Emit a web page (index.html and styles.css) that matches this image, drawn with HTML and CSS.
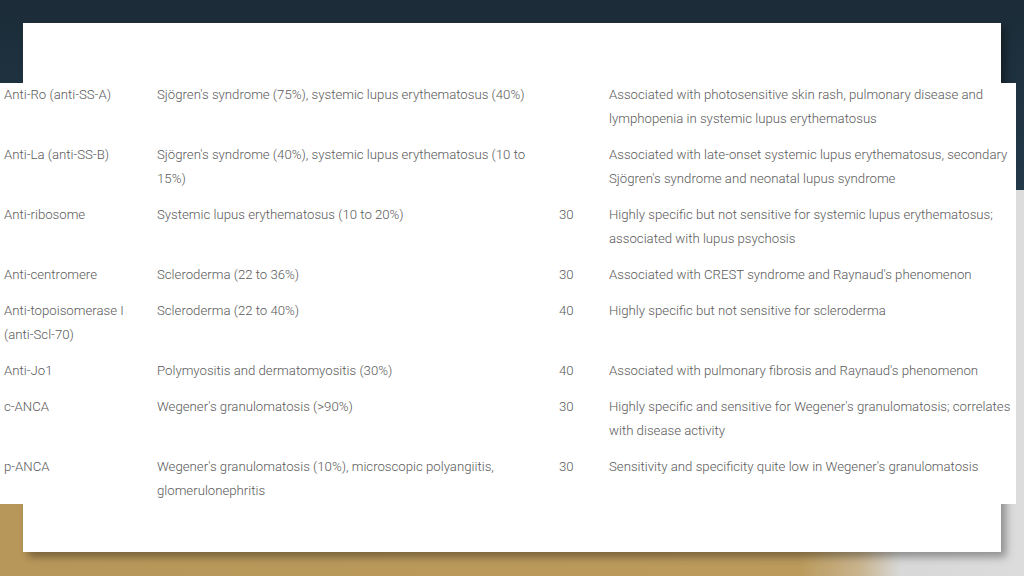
FILE: index.html
```html
<!DOCTYPE html>
<html>
<head>
<meta charset="utf-8">
<link rel="stylesheet" href="styles.css">
</head>
<body>
<div class="page">
  <div class="card">
    <div class="table">
      <div class="row"><div class="c1">Anti-Ro (anti-SS-A)</div><div class="c2">Sjögren's syndrome (75%), systemic lupus erythematosus (40%)</div><div class="c3"></div><div class="c4">Associated with photosensitive skin rash, pulmonary disease and lymphopenia in systemic lupus erythematosus</div></div>
      <div class="row"><div class="c1">Anti-La (anti-SS-B)</div><div class="c2">Sjögren's syndrome (40%), systemic lupus erythematosus (10 to 15%)</div><div class="c3"></div><div class="c4">Associated with late-onset systemic lupus erythematosus, secondary Sjögren's syndrome and neonatal lupus syndrome</div></div>
      <div class="row"><div class="c1">Anti-ribosome</div><div class="c2">Systemic lupus erythematosus (10 to 20%)</div><div class="c3">30</div><div class="c4">Highly specific but not sensitive for systemic lupus erythematosus; associated with lupus psychosis</div></div>
      <div class="row"><div class="c1">Anti-centromere</div><div class="c2">Scleroderma (22 to 36%)</div><div class="c3">30</div><div class="c4">Associated with CREST syndrome and Raynaud's phenomenon</div></div>
      <div class="row"><div class="c1">Anti-topoisomerase I (anti-Scl-70)</div><div class="c2">Scleroderma (22 to 40%)</div><div class="c3">40</div><div class="c4">Highly specific but not sensitive for scleroderma</div></div>
      <div class="row"><div class="c1">Anti-Jo1</div><div class="c2">Polymyositis and dermatomyositis (30%)</div><div class="c3">40</div><div class="c4">Associated with pulmonary fibrosis and Raynaud's phenomenon</div></div>
      <div class="row"><div class="c1">c-ANCA</div><div class="c2">Wegener's granulomatosis (&gt;90%)</div><div class="c3">30</div><div class="c4">Highly specific and sensitive for Wegener's granulomatosis; correlates with disease activity</div></div>
      <div class="row"><div class="c1">p-ANCA</div><div class="c2">Wegener's granulomatosis (10%), microscopic polyangiitis, glomerulonephritis</div><div class="c3">30</div><div class="c4">Sensitivity and specificity quite low in Wegener's granulomatosis</div></div>
    </div>
  </div>
</div>
</body>
</html>
```

FILE: styles.css
```css
html, body {
  margin: 0;
  padding: 0;
}
body {
  width: 1024px;
  height: 576px;
  overflow: hidden;
  font-family: Roboto, "Liberation Sans", sans-serif;
  background:
    linear-gradient(180deg, #1c2c38 0px, #22394a 190px, transparent 190px),
    linear-gradient(90deg, #b8975a 0px, #bb9a5c 800px, #c9b48e 860px, #d8d8d8 900px, #dcdcdc 1024px);
}
.page {
  padding: 23px 23px 0 23px;
}
.card {
  width: 978px;
  height: 529px;
  background: #ffffff;
  box-shadow: 5px 5px 8px rgba(0, 0, 0, 0.35);
  padding-top: 60px;
  box-sizing: border-box;
}
.table {
  margin-left: -23px;
  width: 1016px;
  background: #ffffff;
  font-weight: 300;
  font-size: 13.2px;
  line-height: 24px;
  color: #5a5a5a;
}
.row {
  display: grid;
  grid-template-columns: 153px 402px 50px 411px;
  padding-bottom: 12px;
}
.row:last-child {
  padding-bottom: 1px;
}
.row > div {
  padding: 0 4px;
}
.row > .c4 {
  padding-right: 2px;
}
```
